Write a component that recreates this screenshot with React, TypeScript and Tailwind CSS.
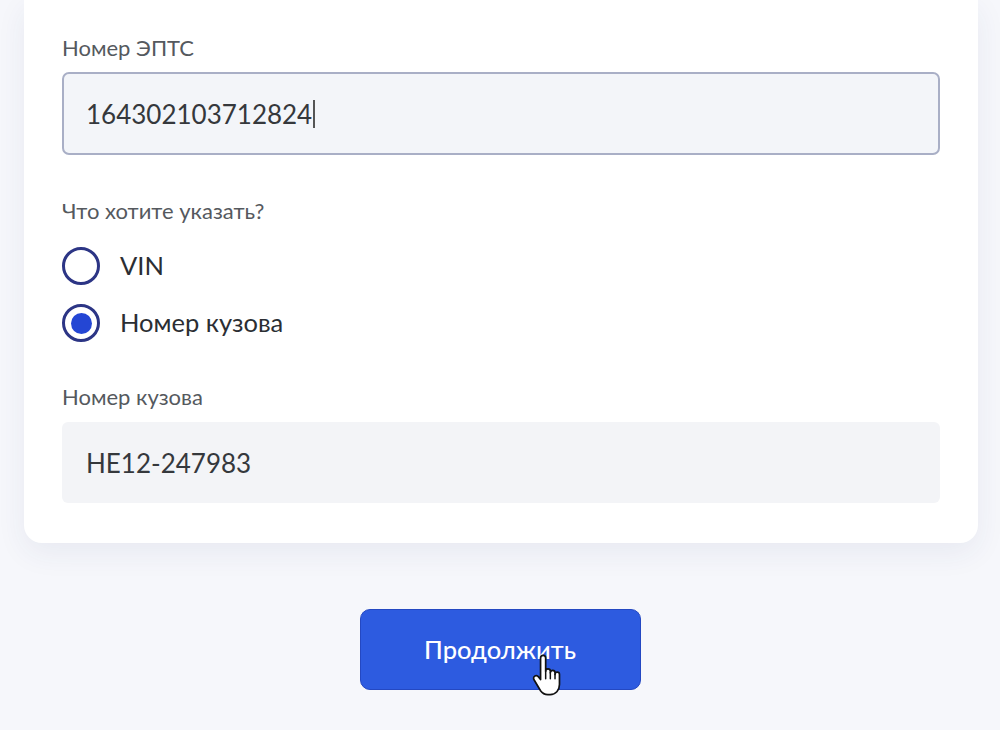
import React from "react";

function Hand() {
  return (
    <svg width="34" height="43" viewBox="0 0 32 40" className="absolute left-[170px] top-[44px]">
      <path
        d="M9 3.5c0-1.6 1.2-2.5 2.4-2.5S13.8 2 13.8 3.5V16c0-1.4 1-2.3 2.2-2.3s2.2.9 2.2 2.3v1.5c0-1.4 1-2.3 2.2-2.3s2.2.9 2.2 2.3v1.5c0-1.4 1-2.2 2.1-2.2s2.1.8 2.1 2.2v9.5c0 5.5-3.6 9.5-8.8 9.5h-2.2c-3 0-5.2-1.3-6.8-3.6L3 24.2c-.9-1.3-.7-2.8.5-3.6 1.2-.8 2.7-.5 3.6.7L9 23.8V3.5z"
        fill="#ffffff"
        stroke="#111"
        strokeWidth="1.6"
        strokeLinejoin="round"
      />
      <path d="M13.8 16v7M18.2 17.5v5.5M22.6 19v4" stroke="#111" strokeWidth="1.4" strokeLinecap="round" />
    </svg>
  );
}

export default function App() {
  return (
    <div
      className="h-[730px] w-[1000px] overflow-hidden bg-[#f6f7fb] px-6"
      style={{ fontFamily: 'Lato, "Noto Sans", sans-serif' }}
    >
      <div className="mr-[-2px] rounded-b-[18px] bg-white px-[38px] pb-10 pt-9 shadow-[0_10px_30px_rgba(40,60,120,0.07)]">
        <div className="h-6 text-[22px] leading-6 text-[#55595e]">Номер ЭПТС</div>
        <div className="mt-3 flex h-[83px] items-center rounded-[7px] border-2 border-[#a9afc6] bg-[#f3f5f9] px-[22px]">
          <span className="text-[26px] leading-none text-[#35383c]">164302103712824</span>
          <span className="ml-[1px] h-[28px] w-[1.5px] bg-[#555]" />
        </div>

        <div className="mt-11 h-6 text-[22px] leading-6 text-[#55595e]">Что хотите указать?</div>
        <div className="mt-6 flex flex-col gap-[19px]">
          <div className="flex items-center gap-5">
            <div className="h-[38px] w-[38px] rounded-full border-[3px] border-[#2c3585] bg-white" />
            <span className="text-[25.5px] leading-none text-[#2b2e33]">VIN</span>
          </div>
          <div className="flex items-center gap-5">
            <div className="flex h-[38px] w-[38px] items-center justify-center rounded-full border-[3px] border-[#2c3585] bg-white">
              <div className="h-[21px] w-[21px] rounded-full bg-[#2446d4]" />
            </div>
            <span className="text-[25.5px] leading-none text-[#2b2e33]">Номер кузова</span>
          </div>
        </div>

        <div className="mt-[43px] h-6 text-[22px] leading-6 text-[#55595e]">Номер кузова</div>
        <div className="mt-[13px] flex h-[81px] items-center rounded-[6px] bg-[#f3f4f7] px-6">
          <span className="text-[26px] leading-none text-[#35383c]">HE12-247983</span>
        </div>
      </div>

      <div className="mt-[66px] flex justify-center">
        <div className="relative flex h-[81px] w-[281px] items-center justify-center rounded-[10px] border border-[#2448c2] bg-[#2d5be0]">
          <span className="text-[25.5px] font-medium leading-none text-white">Продолжить</span>
          <Hand />
        </div>
      </div>
    </div>
  );
}
